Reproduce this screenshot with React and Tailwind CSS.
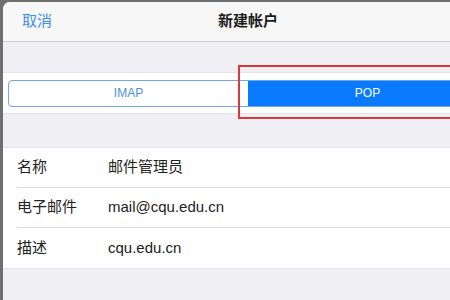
import React from 'react';

const rows = [
  { label: '名称', value: '邮件管理员' },
  { label: '电子邮件', value: 'mail@cqu.edu.cn' },
  { label: '描述', value: 'cqu.edu.cn' },
];

const App = () => {
  return (
    <div
      className="relative w-[450px] h-[300px] overflow-hidden bg-[#6f6f6f] pl-[3px] pt-[2px]"
      style={{ fontFamily: '"Liberation Sans", "Noto Sans CJK SC", sans-serif' }}
    >
      <div className="w-[490px] h-[320px] rounded-tl-[7px] overflow-hidden bg-[#efeff4] flex flex-col">
        {/* Header */}
        <div className="relative h-[40px] shrink-0 bg-[#f7f7f8] border-b border-[#cfcfd3] flex items-center justify-center">
          <span className="absolute left-[19px] text-[15px] text-[#3d8ee8]">取消</span>
          <span className="text-[15px] font-semibold text-[#1c1c1c]">新建帐户</span>
          <span className="absolute right-[6px] text-[15px] text-[#c9c9cc]">存储</span>
        </div>

        {/* Segmented control */}
        <div className="mt-[30px] h-[42px] shrink-0 bg-white border-y border-[#e3e3e8] flex items-center px-[5px]">
          <div className="flex w-full h-[27px] rounded-[4px] border border-[#6fa8ea] overflow-hidden">
            <div className="flex-1 flex items-center justify-center text-[12px] text-[#4a8fe0]">IMAP</div>
            <div className="flex-1 flex items-center justify-center text-[12px] text-white bg-[#0a7bff]">POP</div>
          </div>
        </div>

        {/* Fields */}
        <div className="mt-[33px] shrink-0 bg-white border-y border-[#e3e3e8]">
          {rows.map((row, i) => (
            <div key={row.label} className="pl-[14px]">
              <div
                className={`h-[40px] flex items-center text-[15px] text-[#222] ${
                  i < rows.length - 1 ? 'border-b border-[#dcdce0]' : ''
                }`}
              >
                <span className="w-[91px] pl-[0px]">{row.label}</span>
                <span>{row.value}</span>
              </div>
            </div>
          ))}
        </div>
      </div>

      {/* red annotation box */}
      <div className="absolute left-[238px] top-[65px] w-[230px] h-[54px] border-2 border-[#d9393b]"></div>
    </div>
  );
};

export default App;
